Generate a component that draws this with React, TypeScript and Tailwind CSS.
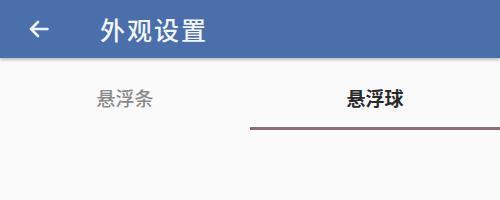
const tabs = ['悬浮条', '悬浮球'];

export default function App() {
  const active = 1;

  return (
    <div className="w-[500px] h-[200px] bg-[#fbfbfc] overflow-hidden" style={{ fontFamily: '"Noto Sans CJK SC", "Noto Sans", sans-serif' }}>
      {/* Top bar */}
      <div className="h-[58px] bg-[#4a6fab] flex items-center shadow-[0_2px_3px_rgba(0,0,0,0.25)] relative z-10">
        <svg className="ml-[29px] w-[20px] h-[18px]" viewBox="0 0 20 18" fill="none" stroke="#eef2fa" strokeWidth={2.6} strokeLinecap="round" strokeLinejoin="round">
          <path d="M18.5 9H2M9 2L2 9l7 7" />
        </svg>
        <span className="ml-[51px] text-[25px] font-medium tracking-[2px] text-[#f3f5fa] leading-none">外观设置</span>
      </div>

      {/* Tabs */}
      <div className="flex mt-[12px]">
        {tabs.map((t, i) => (
          <div key={t} className="flex-1 flex flex-col items-center">
            <div
              className={
                i === active
                  ? 'h-[57px] flex items-center text-[19px] font-bold text-[#2a2a2a]'
                  : 'h-[57px] flex items-center text-[19px] font-medium text-[#8a8a8a]'
              }
            >
              {t}
            </div>
            <div className={i === active ? 'h-[3px] w-full bg-[#8d6e74]' : 'h-[3px] w-full'} />
          </div>
        ))}
      </div>
    </div>
  );
}
